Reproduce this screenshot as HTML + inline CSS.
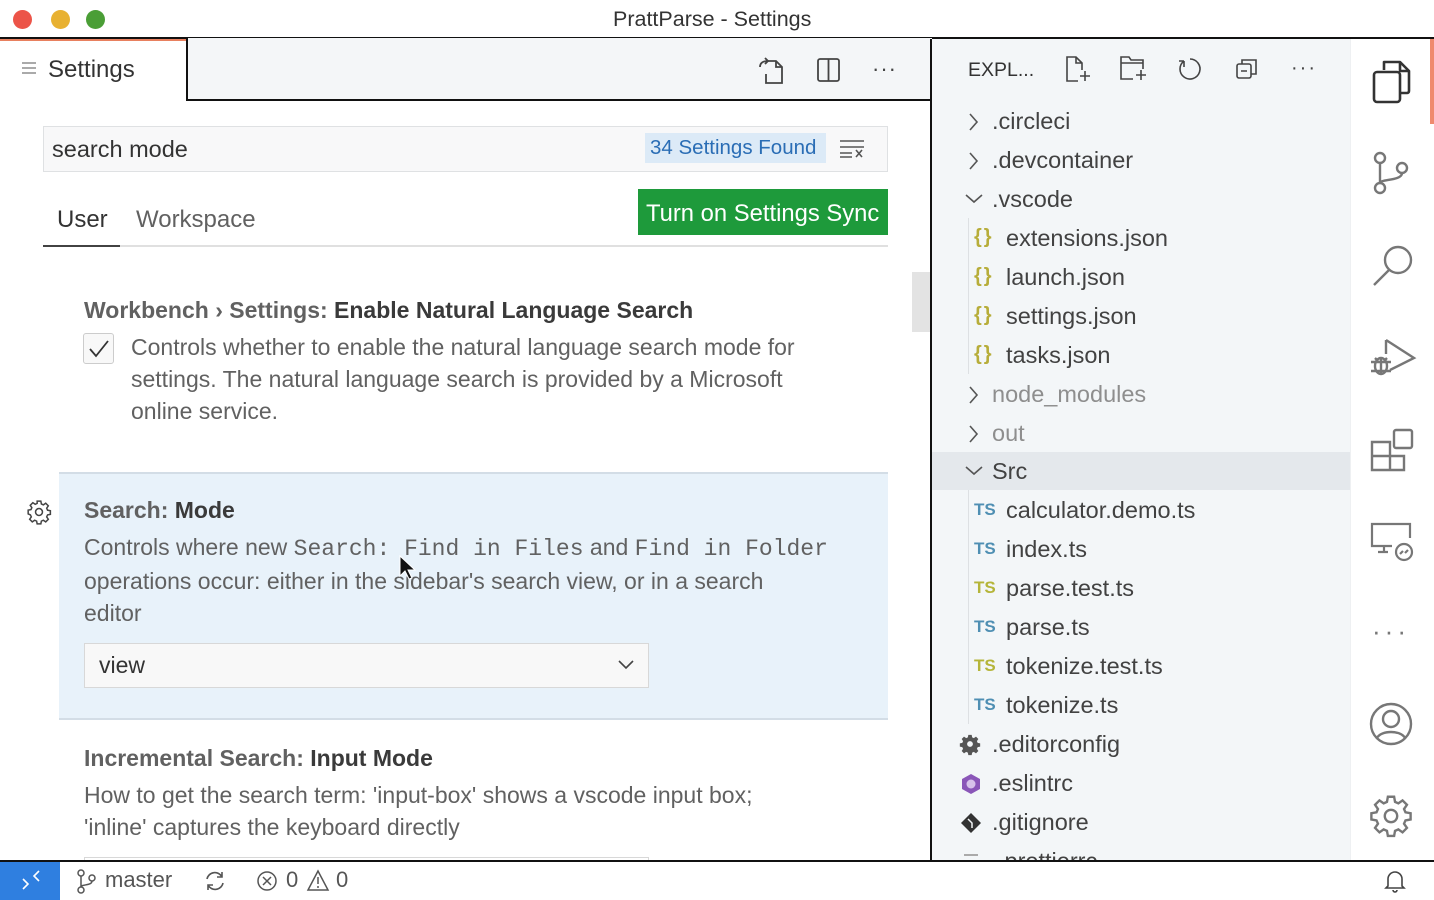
<!DOCTYPE html>
<html><head><meta charset="utf-8"><style>
*{margin:0;padding:0;box-sizing:border-box}
body{width:1434px;height:900px;overflow:hidden;background:#fff;font-family:"Liberation Sans",sans-serif;color:#424242;position:relative}
.a{position:absolute}
.t{position:absolute;white-space:nowrap;line-height:1}
svg{position:absolute;overflow:visible}
.mono{font-family:"Liberation Mono",monospace;font-size:23px}
.row{position:absolute;left:932px;width:418px;height:39px}
.row span{position:absolute;top:6px;font-size:23.5px;white-space:nowrap;color:#424242}
.ch{position:absolute;left:36px}
.ts{position:absolute;top:9px;font-size:17px;font-weight:bold;color:#4f8fb3}
.tsy{color:#b5b53a}
.js{position:absolute;top:7px;font-size:20px;font-weight:bold;color:#b7ad3a;letter-spacing:2px}
</style></head><body>
<div class="a" style="left:0;top:0;width:1434px;height:38px;background:#fff"></div>
<div class="a" style="left:13px;top:10px;width:19px;height:19px;border-radius:50%;background:#ec5448"></div>
<div class="a" style="left:51px;top:10px;width:19px;height:19px;border-radius:50%;background:#e8b131"></div>
<div class="a" style="left:86px;top:10px;width:19px;height:19px;border-radius:50%;background:#4a9e36"></div>
<div class="t" style="left:613px;top:9px;font-size:21.5px;color:#333">PrattParse - Settings</div>
<div class="a" style="left:0;top:37px;width:1434px;height:2px;background:#111"></div>

<div class="a" style="left:0;top:39px;width:187px;height:61px;background:#fff"></div>
<div class="a" style="left:0;top:39px;width:187px;height:2px;background:#e8805f"></div>
<div class="a" style="left:22px;top:62px;width:14px;height:2px;background:#aaa;box-shadow:0 5px 0 #aaa,0 10px 0 #aaa"></div>
<div class="t" style="left:48px;top:58px;font-size:24px;color:#333">Settings</div>
<div class="a" style="left:186px;top:38px;width:746px;height:63px;border:2px solid #111;border-top:none;border-right:none;background:#f4f6f8"></div>
<svg style="left:758px;top:57px" width="30" height="28" viewBox="0 0 30 28" fill="none" stroke="#444" stroke-width="1.8"><path d="M8 4h10l6 6v16H8v-9"/><path d="M18 4v6h6"/><path d="M2 10c0-4 3-6 8-6M7 1l3 3-3 3"/></svg>
<svg style="left:817px;top:58px" width="24" height="24" fill="none" stroke="#444" stroke-width="1.8"><rect x="1" y="1" width="21" height="22" rx="2"/><path d="M11.5 1v22"/></svg>
<div class="t" style="left:872px;top:58px;font-size:22px;color:#444;letter-spacing:1px">···</div>

<div class="a" style="left:43px;top:126px;width:845px;height:46px;background:#f8f8f9;border:1px solid #dfe1e3"></div>
<div class="t" style="left:52px;top:138px;font-size:23.5px;color:#333">search mode</div>
<div class="a" style="left:645px;top:133px;width:181px;height:30px;background:#dceaf7"></div>
<div class="t" style="left:650px;top:138px;font-size:20.5px;color:#2a6db5">34 Settings Found</div>
<svg style="left:840px;top:140px" width="26" height="18" fill="none" stroke="#555" stroke-width="1.6"><path d="M0 1h24M0 7h24M0 13h12M0 17h12M16 10l6 7M22 10l-6 7"/></svg>

<div class="a" style="left:638px;top:189px;width:250px;height:46px;background:#1e9a3b"></div>
<div class="t" style="left:646px;top:202px;font-size:23.8px;color:#fff">Turn on Settings Sync</div>
<div class="t" style="left:57px;top:208px;font-size:24px;color:#333">User</div>
<div class="t" style="left:136px;top:208px;font-size:24px;color:#616161">Workspace</div>
<div class="a" style="left:43px;top:245px;width:845px;height:2px;background:#e0e0e0"></div>
<div class="a" style="left:43px;top:245px;width:77px;height:2px;background:#424242"></div>

<div class="a" style="left:912px;top:272px;width:18px;height:60px;background:#e3e3e3"></div>

<div class="t" style="left:84px;top:299px;font-size:23px;color:#616161;font-weight:bold">Workbench › Settings: <span style="color:#3a3a3a">Enable Natural Language Search</span></div>
<div class="a" style="left:83px;top:333px;width:31px;height:31px;border:1px solid #ccc;border-radius:3px;background:#f8f8f8"></div>
<svg style="left:88px;top:340px" width="22" height="18" fill="none" stroke="#333" stroke-width="1.8"><path d="M2 9l6 7L20 1"/></svg>
<div class="a" style="left:131px;top:331px;font-size:23px;line-height:32px;color:#616161;width:710px">Controls whether to enable the natural language search mode for settings. The natural language search is provided by a Microsoft online service.</div>

<div class="a" style="left:59px;top:472px;width:829px;height:248px;background:#e8f2fa;border-top:2px solid #d3dde6;border-bottom:2px solid #d3dde6"></div>
<svg style="left:26px;top:499px" width="26" height="26" viewBox="0 0 24 24" fill="none" stroke="#444" stroke-width="1.4"><circle cx="12" cy="12" r="3.2"/><path d="M10.3 2h3.4l.5 2.6 1.8.8 2.2-1.5 2.4 2.4-1.5 2.2.8 1.8 2.6.5v3.4l-2.6.5-.8 1.8 1.5 2.2-2.4 2.4-2.2-1.5-1.8.8-.5 2.6h-3.4l-.5-2.6-1.8-.8-2.2 1.5-2.4-2.4 1.5-2.2-.8-1.8L2 13.7v-3.4l2.6-.5.8-1.8-1.5-2.2 2.4-2.4 2.2 1.5 1.8-.8z"/></svg>
<div class="t" style="left:84px;top:499px;font-size:23px;color:#616161;font-weight:bold">Search: <span style="color:#3a3a3a">Mode</span></div>
<div class="a" style="left:84px;top:531px;font-size:23px;line-height:32px;color:#616161;width:765px">Controls where new <span class="mono">Search: Find in Files</span> and <span class="mono">Find in Folder</span> operations occur: either in the sidebar's search view, or in a search<br>editor</div>
<div class="a" style="left:84px;top:643px;width:565px;height:45px;background:#f8f8f8;border:1px solid #d8d8d8"></div>
<div class="t" style="left:99px;top:654px;font-size:23px;color:#333">view</div>
<svg style="left:618px;top:660px" width="16" height="10" fill="none" stroke="#444" stroke-width="1.6"><path d="M1 1l7 7 7-7"/></svg>
<svg style="left:399px;top:555px" width="16" height="26"><path d="M1 1v20l5-5 4 8 3-1-4-8h7z" fill="#111" stroke="#fff" stroke-width="1"/></svg>

<div class="t" style="left:84px;top:747px;font-size:23px;color:#616161;font-weight:bold">Incremental Search: <span style="color:#3a3a3a">Input Mode</span></div>
<div class="a" style="left:84px;top:779px;font-size:23px;line-height:32px;color:#616161;width:720px">How to get the search term: 'input-box' shows a vscode input box; 'inline' captures the keyboard directly</div>
<div class="a" style="left:84px;top:857px;width:565px;height:4px;border:1px solid #d8d8d8;border-bottom:none"></div>

<div class="a" style="left:930px;top:39px;width:2px;height:822px;background:#111"></div>
<div class="a" style="left:932px;top:39px;width:418px;height:822px;background:#f3f6f8"></div>
<div class="t" style="left:968px;top:61px;font-size:19.5px;color:#333">EXPL...</div>
<svg style="left:1065px;top:56px" width="28" height="28" fill="none" stroke="#444" stroke-width="1.6"><path d="M13 25H2V1h9l6 6v7M11 1v6h6M20 15v10M15 20h10"/></svg>
<svg style="left:1120px;top:56px" width="30" height="28" fill="none" stroke="#444" stroke-width="1.6"><path d="M13 23H1V1h8l2 3h12v9M1 7h22M21 14v10M16 19h10"/></svg>
<svg style="left:1178px;top:58px" width="24" height="24" fill="none" stroke="#444" stroke-width="1.6"><path d="M6 3A10 10 0 1 0 12 1M6 3v6M6 3h-5"/></svg>
<svg style="left:1236px;top:58px" width="22" height="22" fill="none" stroke="#444" stroke-width="1.6"><rect x="1" y="6" width="14" height="14" rx="2"/><path d="M6 6V2h14v14h-5M5 13h6"/></svg>
<div class="t" style="left:1291px;top:58px;font-size:20px;color:#444;letter-spacing:2px">···</div>

<div class="a" style="left:932px;top:452px;width:418px;height:38px;background:#e4e8ec"></div>
<div class="a" style="left:968px;top:218px;width:1px;height:156px;background:#dde0e3"></div>
<div class="a" style="left:968px;top:490px;width:1px;height:234px;background:#dde0e3"></div>

<div class="row" style="top:102px"><svg class="ch" style="top:11px" width="10" height="18" fill="none" stroke="#555" stroke-width="1.6"><path d="M2 1l7 8-7 8"/></svg><span style="left:60px">.circleci</span></div>
<div class="row" style="top:141px"><svg class="ch" style="top:11px" width="10" height="18" fill="none" stroke="#555" stroke-width="1.6"><path d="M2 1l7 8-7 8"/></svg><span style="left:60px">.devcontainer</span></div>
<div class="row" style="top:180px"><svg class="ch" style="top:14px;left:33px" width="18" height="10" fill="none" stroke="#555" stroke-width="1.6"><path d="M1 1l8 7 8-7"/></svg><span style="left:60px">.vscode</span></div>
<div class="row" style="top:219px"><b class="js" style="left:42px">{}</b><span style="left:74px">extensions.json</span></div>
<div class="row" style="top:258px"><b class="js" style="left:42px">{}</b><span style="left:74px">launch.json</span></div>
<div class="row" style="top:297px"><b class="js" style="left:42px">{}</b><span style="left:74px">settings.json</span></div>
<div class="row" style="top:336px"><b class="js" style="left:42px">{}</b><span style="left:74px">tasks.json</span></div>
<div class="row" style="top:375px"><svg class="ch" style="top:11px" width="10" height="18" fill="none" stroke="#555" stroke-width="1.6"><path d="M2 1l7 8-7 8"/></svg><span style="left:60px;color:#8e8e8e">node_modules</span></div>
<div class="row" style="top:414px"><svg class="ch" style="top:11px" width="10" height="18" fill="none" stroke="#555" stroke-width="1.6"><path d="M2 1l7 8-7 8"/></svg><span style="left:60px;color:#8e8e8e">out</span></div>
<div class="row" style="top:452px"><svg class="ch" style="top:14px;left:33px" width="18" height="10" fill="none" stroke="#555" stroke-width="1.6"><path d="M1 1l8 7 8-7"/></svg><span style="left:60px">Src</span></div>
<div class="row" style="top:491px"><b class="ts" style="left:42px">TS</b><span style="left:74px">calculator.demo.ts</span></div>
<div class="row" style="top:530px"><b class="ts" style="left:42px">TS</b><span style="left:74px">index.ts</span></div>
<div class="row" style="top:569px"><b class="ts tsy" style="left:42px">TS</b><span style="left:74px">parse.test.ts</span></div>
<div class="row" style="top:608px"><b class="ts" style="left:42px">TS</b><span style="left:74px">parse.ts</span></div>
<div class="row" style="top:647px"><b class="ts tsy" style="left:42px">TS</b><span style="left:74px">tokenize.test.ts</span></div>
<div class="row" style="top:686px"><b class="ts" style="left:42px">TS</b><span style="left:74px">tokenize.ts</span></div>
<div class="row" style="top:725px"><svg style="left:28px;top:9px" width="20" height="20" viewBox="0 0 24 24"><path fill="#555" d="M10 1h4l.6 3 2 .9 2.6-1.7 2.8 2.8-1.7 2.6.9 2 3 .6v4l-3 .6-.9 2 1.7 2.6-2.8 2.8-2.6-1.7-2 .9-.6 3h-4l-.6-3-2-.9-2.6 1.7-2.8-2.8 1.7-2.6-.9-2-3-.6v-4l3-.6.9-2-1.7-2.6 2.8-2.8 2.6 1.7 2-.9z"/><circle cx="12" cy="12" r="3.5" fill="#f3f6f8"/></svg><span style="left:60px">.editorconfig</span></div>
<div class="row" style="top:764px"><svg style="left:28px;top:9px" width="22" height="22"><path d="M11 1l9 5v10l-9 5-9-5V6z" fill="#8a56b8"/><circle cx="11" cy="11" r="4.5" fill="#d7c2ea"/></svg><span style="left:60px">.eslintrc</span></div>
<div class="row" style="top:803px"><svg style="left:28px;top:9px" width="22" height="22"><path d="M11 1l10 10-10 10L1 11z" fill="#333"/><path d="M8 7l4 4v5" stroke="#f3f6f8" stroke-width="1.5" fill="none"/></svg><span style="left:60px">.gitignore</span></div>
<div class="row" style="top:842px;height:19px;overflow:hidden"><div class="a" style="left:32px;top:12px;width:14px;height:2px;background:#aaa"></div><span style="left:66px">.prettierrc</span></div>

<div class="a" style="left:1350px;top:39px;width:84px;height:822px;background:#fff;border-left:1px solid #eef0f2"></div>
<div class="a" style="left:1430px;top:39px;width:4px;height:85px;background:#ef8a6e"></div>
<svg style="left:1372px;top:60px" width="40" height="44" fill="none" stroke="#333" stroke-width="2.6" stroke-linejoin="round"><path d="M12 10V2h16l9 9v20a2 2 0 0 1-2 2h-8"/><path d="M28 2v9h9"/><rect x="2" y="12" width="26" height="30" rx="3"/></svg>
<svg style="left:1374px;top:152px" width="36" height="42" fill="none" stroke="#777" stroke-width="2.4"><circle cx="6" cy="6" r="5"/><circle cx="6" cy="36" r="5"/><circle cx="28" cy="16" r="5"/><path d="M6 11v20M28 21c0 8-22 6-22 10"/></svg>
<svg style="left:1372px;top:244px" width="42" height="42" fill="none" stroke="#777" stroke-width="2.4"><circle cx="26" cy="16" r="13"/><path d="M17 26L2 41"/></svg>
<svg style="left:1370px;top:336px" width="46" height="44" fill="none" stroke="#777" stroke-width="2.4"><path d="M16 4l28 18-24 12M16 4v14"/><ellipse cx="11" cy="30" rx="6" ry="8"/><path d="M1 26h20M1 35h20M5 22l3 3M17 22l-3 3M11 22v16"/></svg>
<svg style="left:1370px;top:428px" width="44" height="44" fill="none" stroke="#777" stroke-width="2.4"><rect x="24" y="2" width="18" height="18" rx="2"/><path d="M2 14h18v28H2zM2 28h32v14H20"/></svg>
<svg style="left:1370px;top:522px" width="44" height="42" fill="none" stroke="#777" stroke-width="2.2"><path d="M22 24H2V2h38v14M14 24v6h-6h10"/><circle cx="34" cy="30" r="8"/><path d="M30 32l3-3M38 28l-3 3"/></svg>
<div class="t" style="left:1372px;top:618px;font-size:26px;color:#777;letter-spacing:4px">···</div>
<svg style="left:1369px;top:702px" width="44" height="44" fill="none" stroke="#777" stroke-width="2.4"><circle cx="22" cy="22" r="20"/><circle cx="22" cy="17" r="8"/><path d="M8 36c4-8 24-8 28 0"/></svg>
<svg style="left:1369px;top:794px" width="44" height="44" viewBox="0 0 24 24" fill="none" stroke="#777" stroke-width="1.3"><circle cx="12" cy="12" r="3.4"/><path d="M10.3 1.5h3.4l.5 2.8 1.8.8 2.3-1.6 2.4 2.4-1.6 2.3.8 1.8 2.8.5v3.4l-2.8.5-.8 1.8 1.6 2.3-2.4 2.4-2.3-1.6-1.8.8-.5 2.8h-3.4l-.5-2.8-1.8-.8-2.3 1.6-2.4-2.4 1.6-2.3-.8-1.8-2.8-.5v-3.4l2.8-.5.8-1.8-1.6-2.3 2.4-2.4 2.3 1.6 1.8-.8z"/></svg>

<div class="a" style="left:0;top:860px;width:1434px;height:2px;background:#111"></div>
<div class="a" style="left:0;top:862px;width:1434px;height:38px;background:#fff"></div>
<div class="a" style="left:0;top:862px;width:60px;height:38px;background:#2f7fe0"></div>
<svg style="left:22px;top:870px" width="18" height="20" fill="none" stroke="#fff" stroke-width="1.6"><path d="M1 9l5 5-5 5M17 1l-5 5 5 5"/></svg>
<svg style="left:77px;top:869px" width="20" height="26" fill="none" stroke="#555" stroke-width="1.5"><circle cx="4" cy="4" r="3"/><circle cx="4" cy="21" r="3"/><circle cx="15" cy="9" r="3"/><path d="M4 7v11M15 12c0 5-11 3-11 6"/></svg>
<div class="t" style="left:105px;top:869px;font-size:22px;color:#555">master</div>
<svg style="left:203px;top:870px" width="24" height="22" fill="none" stroke="#555" stroke-width="1.6"><path d="M4 9a8 8 0 0 1 15-2M20 13a8 8 0 0 1-15 2M19 2v5h-5M5 20v-5h5"/></svg>
<svg style="left:257px;top:871px" width="20" height="20" fill="none" stroke="#555" stroke-width="1.5"><circle cx="10" cy="10" r="9"/><path d="M6 6l8 8M14 6l-8 8"/></svg>
<div class="t" style="left:286px;top:869px;font-size:22px;color:#555">0</div>
<svg style="left:307px;top:869px" width="22" height="22" fill="none" stroke="#555" stroke-width="1.5"><path d="M11 2l10 19H1z"/><path d="M11 8v7M11 17v2"/></svg>
<div class="t" style="left:336px;top:869px;font-size:22px;color:#555">0</div>
<svg style="left:1385px;top:869px" width="20" height="24" fill="none" stroke="#444" stroke-width="1.6"><path d="M3 17V10a7 7 0 0 1 14 0v7l2 2H1zM8 21a2 2 0 0 0 4 0"/></svg>
</body></html>
